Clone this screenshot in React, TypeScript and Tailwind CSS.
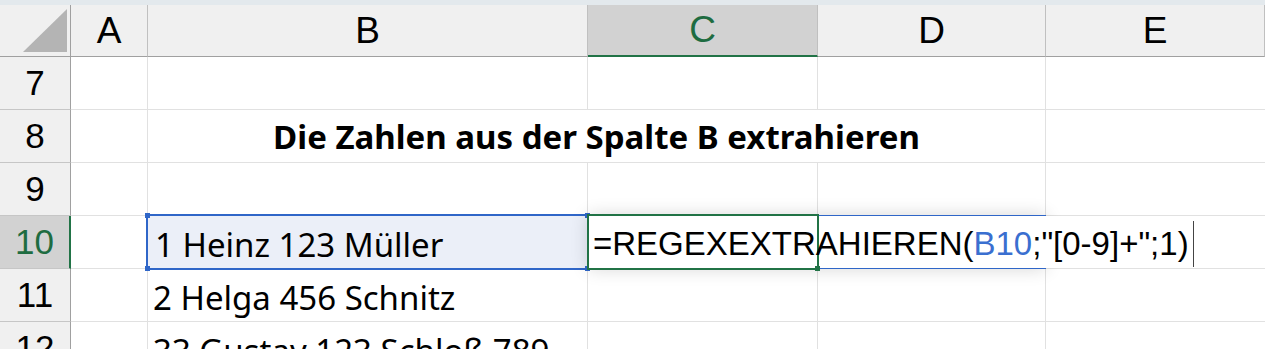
import { ReactNode } from "react";

const widths = [71, 77, 440, 230, 228, 219];

const cellFont = { fontFamily: '"Noto Sans", sans-serif' };
const uiFont = { fontFamily: '"Liberation Sans", Arial, sans-serif' };

function RowHeader({ n, active }: { n: number; active?: boolean }) {
  return (
    <div
      className={`w-[71px] shrink-0 flex items-center justify-center text-[35px] border-b border-b-[#c6c6c6] ${
        active
          ? "bg-[#d2d2d2] text-[#1e6c41] border-r-2 border-r-[#217346]"
          : "bg-[#f0f0f0] text-black border-r border-r-[#a0a0a0]"
      }`}
      style={uiFont}
    >
      {n}
    </div>
  );
}

function Cell({ w, children, noRight }: { w: number; children?: ReactNode; noRight?: boolean }) {
  return (
    <div
      className={`shrink-0 flex items-center pl-[5px] pt-[6px] text-[33px] text-black whitespace-nowrap border-b border-b-[#e1e1e1] ${
        noRight ? "" : "border-r border-r-[#e1e1e1]"
      }`}
      style={{ width: w, ...cellFont }}
    >
      {children}
    </div>
  );
}

export default function App() {
  const cols = ["A", "B", "C", "D", "E"];
  return (
    <div className="relative w-[1265px] h-[349px] overflow-hidden bg-white">
      <div className="h-[5px] bg-[#e3e9ed]" />
      {/* column headers */}
      <div className="flex h-[52px]">
        <div className="w-[71px] shrink-0 bg-[#f0f0f0] border-r border-r-[#a0a0a0] border-b border-b-[#a0a0a0]">
          <svg width="70" height="51" viewBox="0 0 70 51">
            <polygon points="23,47 67,47 67,4" fill="#b4b4b4" />
          </svg>
        </div>
        {cols.map((c, i) => {
          const active = c === "C";
          return (
            <div
              key={c}
              className={`shrink-0 flex items-center justify-center text-[37px] border-r border-r-[#c0c0c0] ${
                active
                  ? "bg-[#d2d2d2] text-[#1e6c41] border-b-2 border-b-[#217346]"
                  : "bg-[#f0f0f0] text-black border-b border-b-[#a0a0a0]"
              }`}
              style={{ width: widths[i + 1], ...uiFont }}
            >
              {c}
            </div>
          );
        })}
      </div>

      {/* row 7 */}
      <div className="flex h-[53px]">
        <RowHeader n={7} />
        <Cell w={77} />
        <Cell w={440} />
        <Cell w={230} />
        <Cell w={228} />
        <Cell w={219} noRight />
      </div>

      {/* row 8 */}
      <div className="flex h-[53px]">
        <RowHeader n={8} />
        <Cell w={77} />
        <div
          className="w-[898px] shrink-0 flex items-center justify-center pt-[2px] text-[33px] font-bold text-black border-r border-r-[#e1e1e1] border-b border-b-[#e1e1e1] whitespace-nowrap"
          style={cellFont}
        >
          Die Zahlen aus der Spalte B extrahieren
        </div>
        <Cell w={219} noRight />
      </div>

      {/* row 9 */}
      <div className="flex h-[53px]">
        <RowHeader n={9} />
        <Cell w={77} />
        <Cell w={440} />
        <Cell w={230} />
        <Cell w={228} />
        <Cell w={219} noRight />
      </div>

      {/* row 10 */}
      <div className="flex h-[53px]">
        <RowHeader n={10} active />
        <Cell w={77} />
        <Cell w={440} />
        <Cell w={230} />
        <Cell w={228} />
        <Cell w={219} noRight />
      </div>

      {/* row 11 */}
      <div className="flex h-[53px]">
        <RowHeader n={11} />
        <Cell w={77} />
        <Cell w={440}>2 Helga 456 Schnitz</Cell>
        <Cell w={230} />
        <Cell w={228} />
        <Cell w={219} noRight />
      </div>

      {/* row 12 */}
      <div className="flex h-[53px]">
        <RowHeader n={12} />
        <Cell w={77} />
        <Cell w={440}>33 Gustav 123 Schloß 789</Cell>
        <Cell w={230} />
        <Cell w={228} />
        <Cell w={219} noRight />
      </div>

      {/* B10 reference highlight */}
      <div
        className="absolute left-[146px] top-[214px] w-[443px] h-[56px] border-2 border-[#2f66c8] bg-[#ebeff8] flex items-center pl-[7px] pt-[6px] text-[33px] text-black whitespace-nowrap"
        style={cellFont}
      >
        1 Heinz 123 Müller
      </div>
      <div className="absolute left-[145px] top-[213px] w-[5px] h-[5px] bg-[#2f66c8]" />
      <div className="absolute left-[145px] top-[266px] w-[5px] h-[5px] bg-[#2f66c8]" />
      <div className="absolute left-[585px] top-[213px] w-[5px] h-[5px] bg-[#2f66c8]" />
      <div className="absolute left-[585px] top-[266px] w-[5px] h-[5px] bg-[#2f66c8]" />

      {/* editor box over C10:D10 */}
      <div className="absolute left-[588px] top-[215px] w-[458px] h-[54px] bg-white shadow-[0_0_18px_rgba(0,0,0,0.16)] border-t border-b border-[#2f66c8]" />
      <div className="absolute left-[587px] top-[214px] w-[232px] h-[56px] border-2 border-[#217346]" />
      <div className="absolute left-[815px] top-[266px] w-[5px] h-[5px] bg-[#217346]" />
      <div className="absolute left-[1045px] top-[216px] w-[150px] h-[52px] bg-white" />
      <div
        className="absolute left-[589px] top-[216px] h-[52px] flex items-center pl-[4px] pt-[3px] text-[33px] text-black whitespace-nowrap"
        style={uiFont}
      >
        =REGEXEXTRAHIEREN(<span className="text-[#3a6fd0]">B10</span>;"[0-9]+";1)
        <span className="ml-[4px] w-px h-[46px] bg-[#444]" />
      </div>
    </div>
  );
}
